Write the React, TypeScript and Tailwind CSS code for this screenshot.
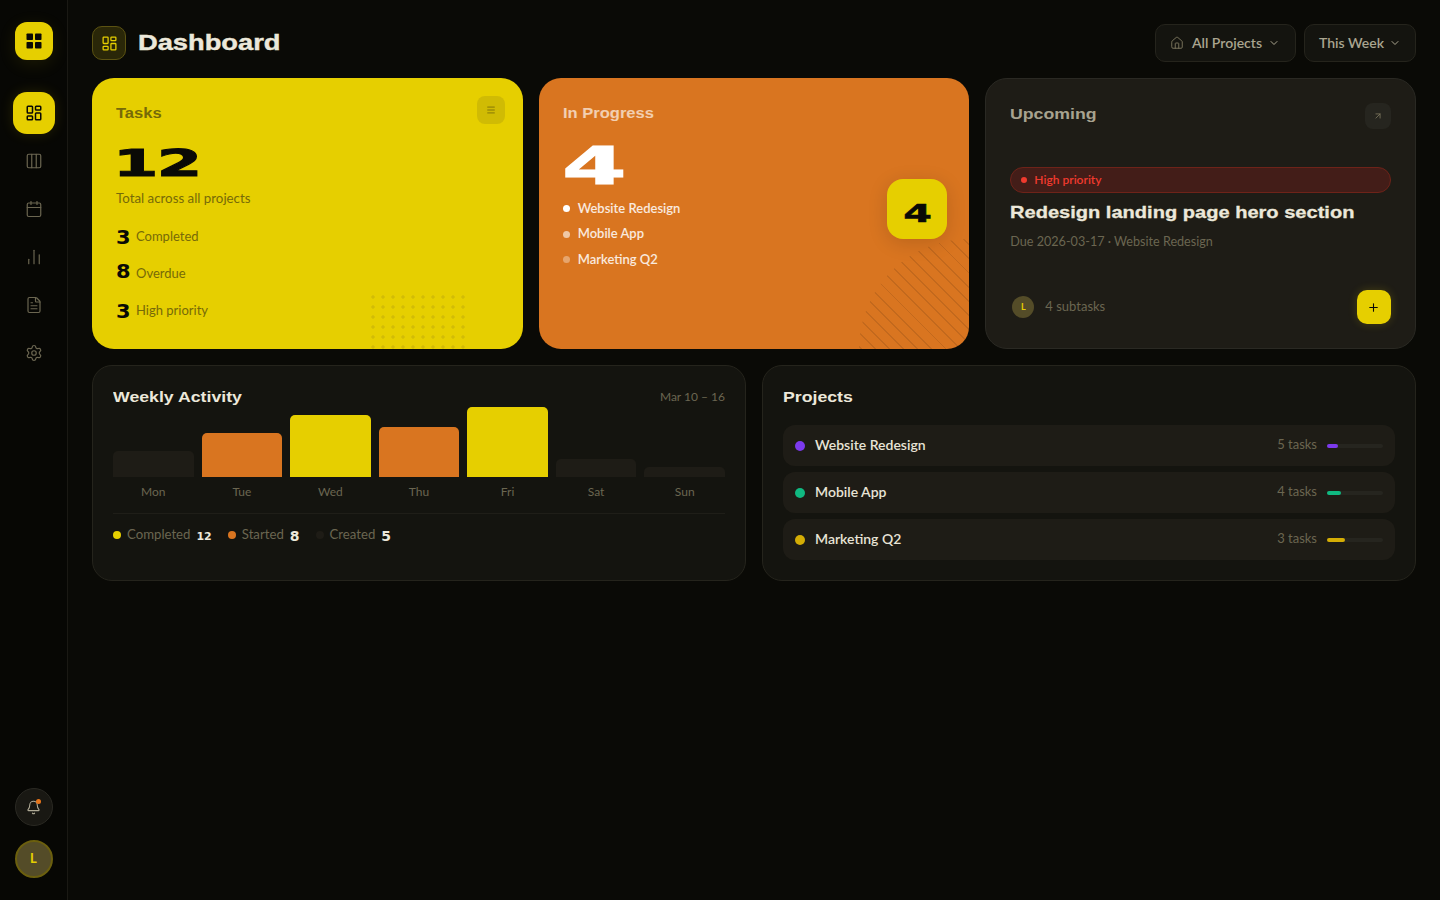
import { ArrowUpRight, Bell, Calendar, ChartNoAxesColumn, ChevronDown, Columns3, FileText, House, LayoutDashboard, Menu, Plus, Settings } from "lucide-react";

// digits use the heavy wide face, headings the stretched one
const display = "font-['DejaVu_Sans',sans-serif] font-bold";
const heading = "font-['Liberation_Sans',sans-serif] font-bold origin-left scale-x-[1.18]";

const days = [
  { name: "Mon", h: "h-[26px]", color: "bg-[#1e1c16]" },
  { name: "Tue", h: "h-[44px]", color: "bg-[#d97520]" },
  { name: "Wed", h: "h-[62px]", color: "bg-[#e6cf00]" },
  { name: "Thu", h: "h-[50px]", color: "bg-[#d97520]" },
  { name: "Fri", h: "h-[70px]", color: "bg-[#e6cf00]" },
  { name: "Sat", h: "h-[18px]", color: "bg-[#1e1c16]" },
  { name: "Sun", h: "h-[10px]", color: "bg-[#1e1c16]" },
];

const projects = [
  { name: "Website Redesign", tasks: 5, dot: "bg-[#7c3aed]", fill: "w-[11px]" },
  { name: "Mobile App", tasks: 4, dot: "bg-[#10b981]", fill: "w-[14px]" },
  { name: "Marketing Q2", tasks: 3, dot: "bg-[#d4ad05]", fill: "w-[18px]" },
];

function Sidebar() {
  const items = [Columns3, Calendar, ChartNoAxesColumn, FileText, Settings];
  return (
    <aside className="flex h-screen w-[68px] shrink-0 flex-col items-center border-r border-[#1a1914] bg-[#070704] pt-[22px] pb-[22px]">
      <div className="flex h-[38px] w-[38px] items-center justify-center rounded-xl bg-[#e6cf00] shadow-[0_4px_18px_rgba(230,207,0,0.1)]">
        <svg width="16" height="16" viewBox="0 0 16 16" fill="#0a0a06">
          <rect x="0.5" y="0.5" width="6.5" height="6.5" rx="0.8" />
          <rect x="9" y="0.5" width="6.5" height="6.5" rx="0.8" />
          <rect x="0.5" y="9" width="6.5" height="6.5" rx="0.8" />
          <rect x="9" y="9" width="6.5" height="6.5" rx="0.8" />
        </svg>
      </div>
      <nav className="mt-8 flex flex-col gap-1.5">
        <div className="flex h-[42px] w-[42px] items-center justify-center rounded-[14px] bg-[#e6cf00] text-[#0a0a06] shadow-[0_0_14px_rgba(230,207,0,0.14)]">
          <LayoutDashboard size={18} strokeWidth={2} />
        </div>
        {items.map((Icon, i) => (
          <div key={i} className="flex h-[42px] w-[42px] items-center justify-center text-[#6b6651]">
            <Icon size={18} strokeWidth={1.6} />
          </div>
        ))}
      </nav>
      <div className="mt-auto flex flex-col items-center gap-3.5">
        <div className="relative flex h-[38px] w-[38px] items-center justify-center rounded-full border border-[#2a2923] bg-[#191813] text-[#b0aa96]">
          <Bell size={15} strokeWidth={1.7} />
          <span className="absolute top-[10px] right-[11px] h-[5px] w-[5px] rounded-full bg-[#e8751a]" />
        </div>
        <div className="flex h-[38px] w-[38px] items-center justify-center rounded-full border-2 border-[#6b5f0e] bg-[#544c28] text-[13px] font-bold text-[#e6cf00]">
          L
        </div>
      </div>
    </aside>
  );
}

function Header() {
  return (
    <header className="flex h-[38px] items-center justify-between">
      <div className="flex items-center gap-3">
        <div className="flex h-[34px] w-[34px] items-center justify-center rounded-[10px] border border-[#5c5312] bg-[#2a2708] text-[#e6cf00]">
          <LayoutDashboard size={17} strokeWidth={1.8} />
        </div>
        <h1 className={`${heading} scale-x-[1.24] text-[22px] leading-none text-[#ece8da] [-webkit-text-stroke:0.4px_#ece8da]`}>Dashboard</h1>
      </div>
      <div className="flex gap-2 text-[14px] leading-[20px] font-semibold text-[#aaa58f]">
        <button className="flex h-[38px] w-[141px] items-center gap-2 rounded-[10px] border border-[#25241c] bg-[#14140f] pb-[1px] pl-[14px]">
          <House size={14} strokeWidth={1.6} className="text-[#7d775f]" />
          All Projects
          <ChevronDown size={12} className="-ml-[2px]" />
        </button>
        <button className="flex h-[38px] w-[112px] items-center gap-2 rounded-[10px] border border-[#25241c] bg-[#14140f] pb-[1px] pl-[14px]">
          This Week
          <ChevronDown size={12} className="-ml-[3px]" />
        </button>
      </div>
    </header>
  );
}

function TasksCard() {
  const stats = [
    { n: 3, label: "Completed", shift: "translate-y-[1px]" },
    { n: 8, label: "Overdue", shift: "-translate-y-[2px]" },
    { n: 3, label: "High priority", shift: "translate-y-[1px]" },
  ];
  return (
    <section className="relative overflow-hidden rounded-[22px] bg-[#e6cf00] px-6 pt-6">
      <div className="flex items-start justify-between">
        <h2 className={`${heading} mt-px text-[14px] leading-[20px] text-[#766a08]`}>Tasks</h2>
        <div className="-mt-[6px] -mr-[6px] flex h-7 w-7 items-center justify-center rounded-lg bg-[#d0bb04] text-[#766a08]">
          <Menu size={10} strokeWidth={2} />
        </div>
      </div>
      <div className={`${display} mt-[21px] -ml-[3px] h-[36px] origin-left scale-x-[1.72] text-[38px] leading-[36px] tracking-[-1px] text-[#0a0a06] [-webkit-text-stroke:1px_#0a0a06]`}>12</div>
      <p className="mt-[7px] text-[13.3px] leading-[20px] text-[#766a08]">Total across all projects</p>
      <ul className="mt-[10px] flex flex-col">
        {stats.map((s) => (
          <li key={s.label} className="flex h-[37px] items-center gap-[6px]">
            <span className={`${display} w-[14px] origin-left scale-x-[1.1] text-[19px] leading-none text-[#0a0a06] ${s.shift}`}>{s.n}</span>
            <span className="text-[13px] text-[#766a08]">{s.label}</span>
          </li>
        ))}
      </ul>
      <div className="absolute bottom-0 left-[276px] h-[57px] w-[100px] bg-[radial-gradient(circle,#d2bc06_1.4px,transparent_1.9px)] bg-[length:10px_10px]" />
    </section>
  );
}

function ProgressCard() {
  const rows = [
    { name: "Website Redesign", dot: "bg-white" },
    { name: "Mobile App", dot: "bg-white/60" },
    { name: "Marketing Q2", dot: "bg-white/35" },
  ];
  return (
    <section className="relative overflow-hidden rounded-[22px] bg-[#d97520] px-6 pt-6">
      <h2 className={`${heading} mt-px text-[14px] leading-[20px] text-white/65`}>In Progress</h2>
      <div className={`${display} mt-[21px] -ml-[1px] h-[46px] origin-left scale-x-[1.82] text-[51px] leading-[46px] text-white [-webkit-text-stroke:1px_#fff]`}>4</div>
      <ul className="mt-[8px] flex flex-col gap-[4.5px]">
        {rows.map((r) => (
          <li key={r.name} className="flex h-[21px] items-center gap-2 text-[13px] font-semibold text-white/85">
            <span className={`h-[7px] w-[7px] rounded-full ${r.dot}`} />
            {r.name}
          </li>
        ))}
      </ul>
      <div className="absolute -right-[110px] -bottom-[110px] h-[220px] w-[220px] rounded-full bg-[repeating-linear-gradient(45deg,transparent_0,transparent_8.6px,rgba(0,0,0,0.1)_8.6px,rgba(0,0,0,0.1)_10px)]" />
      <div className="absolute top-[101px] right-[22px] flex h-[60px] w-[60px] items-center justify-center rounded-2xl bg-[#e6cf00] shadow-[0_4px_20px_rgba(0,0,0,0.14)]">
        <span className={`${display} mt-2 scale-x-[1.65] text-[25px] leading-none text-[#0a0a06] [-webkit-text-stroke:0.5px_#0a0a06]`}>4</span>
      </div>
    </section>
  );
}

function UpcomingCard() {
  return (
    <section className="flex flex-col rounded-[22px] border border-[#2a2923] bg-[#1e1c16] px-6 pt-6 pb-6">
      <div className="flex items-start justify-between">
        <h2 className={`${heading} mt-[1px] text-[15px] leading-[20px] font-semibold text-[#a8a38f]`}>Upcoming</h2>
        <div className="flex h-[26px] w-[26px] items-center justify-center rounded-lg bg-[#26251f] text-[#7d775f]">
          <ArrowUpRight size={10} />
        </div>
      </div>
      <div className="mt-[38px] flex h-[26px] items-center gap-[7px] rounded-full border border-[#6e2319] bg-[#431d18] pl-[10px] text-[12px] font-semibold text-[#f03a2e]">
        <span className="h-[6px] w-[6px] rounded-full bg-[#f03a2e]" />
        High priority
      </div>
      <h3 className={`${heading} mt-[8px] text-[17px] leading-[24px] text-[#ece8da] [-webkit-text-stroke:0.3px_#ece8da]`}>Redesign landing page hero section</h3>
      <p className="mt-[7px] text-[12.6px] leading-[20px] text-[#6b6651]">Due 2026-03-17 · Website Redesign</p>
      <div className="mt-auto flex items-center justify-between">
        <div className="flex items-center gap-[11px] pl-[2px]">
          <div className="flex h-[22px] w-[22px] items-center justify-center rounded-full bg-[#544c28] text-[9px] font-bold text-[#e6cf00]">L</div>
          <span className="text-[13px] text-[#6b6651]">4 subtasks</span>
        </div>
        <div className="flex h-[34px] w-[34px] items-center justify-center rounded-[10px] bg-[#e6cf00] text-[#0a0a06] shadow-[0_0_10px_rgba(230,207,0,0.2)]">
          <Plus size={13} />
        </div>
      </div>
    </section>
  );
}

function WeeklyCard() {
  const legend = [
    { label: "Completed", n: 12, dot: "bg-[#e6cf00]" },
    { label: "Started", n: 8, dot: "bg-[#d97520]" },
    { label: "Created", n: 5, dot: "bg-[#1e1c16]" },
  ];
  return (
    <section className="rounded-[20px] border border-[#25241c] bg-[#14140f] px-5 pt-[21px]">
      <div className="flex h-5 items-center justify-between">
        <h2 className={`${heading} scale-x-[1.16] text-[15px] leading-[20px] text-[#ece8da]`}>Weekly Activity</h2>
        <span className="text-[12px] text-[#6b6651]">Mar 10 – 16</span>
      </div>
      <div className="grid h-[70px] grid-cols-7 items-end gap-2">
        {days.map((d) => (
          <div key={d.name} className={`${d.h} ${d.color} rounded-t-[5px]`} />
        ))}
      </div>
      <div className="mt-[7px] grid grid-cols-7 gap-2 border-b border-[#1f1e18] pb-[13px]">
        {days.map((d) => (
          <span key={d.name} className="text-center text-[12px] leading-[16px] text-[#6b6651]">{d.name}</span>
        ))}
      </div>
      <div className="mt-[11px] flex h-5 items-center gap-4">
        {legend.map((l) => (
          <div key={l.label} className="flex items-center gap-[6px]">
            <span className={`h-2 w-2 rounded-full ${l.dot}`} />
            <span className="text-[13.2px] text-[#6b6651]">{l.label}</span>
            <span className={`${display} mt-[3px] leading-none text-[#ece8da] ${l.n > 9 ? "text-[11px]" : "text-[14px]"}`}>{l.n}</span>
          </div>
        ))}
      </div>
    </section>
  );
}

function ProjectsCard() {
  return (
    <section className="rounded-[20px] border border-[#25241c] bg-[#14140f] px-5 pt-[21px]">
      <h2 className={`${heading} scale-x-[1.16] text-[15px] leading-[20px] text-[#ece8da]`}>Projects</h2>
      <ul className="mt-[18px] flex flex-col gap-[6px]">
        {projects.map((p) => (
          <li key={p.name} className="flex h-[41px] items-center rounded-xl bg-[#1e1c16] px-3">
            <span className={`h-[10px] w-[10px] rounded-full ${p.dot}`} />
            <span className="ml-[10px] pb-[2px] text-[14px] font-semibold text-[#e8e4d6]">{p.name}</span>
            <span className="ml-auto pb-[2px] text-[13px] text-[#6b6651]">{p.tasks} tasks</span>
            <div className="ml-[10px] h-1 w-14 rounded-full bg-[#26251f]">
              <div className={`h-1 rounded-full ${p.dot} ${p.fill}`} />
            </div>
          </li>
        ))}
      </ul>
    </section>
  );
}

export default function App() {
  return (
    <div className="flex h-screen bg-[#0a0a06] font-['Lato',sans-serif]">
      <Sidebar />
      <main className="flex-1 px-6 pt-6">
        <Header />
        <div className="mt-4 grid h-[271px] grid-cols-3 gap-4">
          <TasksCard />
          <ProgressCard />
          <UpcomingCard />
        </div>
        <div className="mt-4 grid h-[216px] grid-cols-2 gap-4">
          <WeeklyCard />
          <ProjectsCard />
        </div>
      </main>
    </div>
  );
}
